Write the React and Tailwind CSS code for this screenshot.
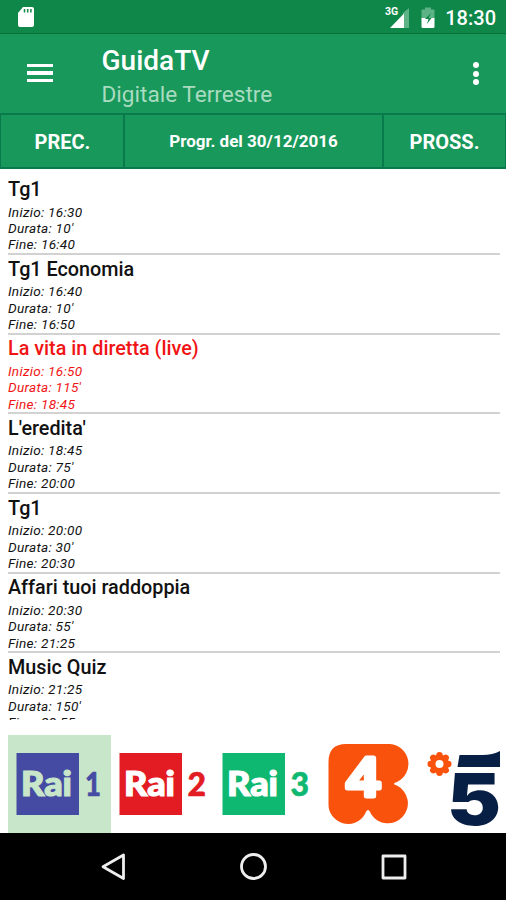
import React from 'react';

const programs = [
  { title: 'Tg1', start: '16:30', duration: "10'", end: '16:40' },
  { title: 'Tg1 Economia', start: '16:40', duration: "10'", end: '16:50' },
  { title: 'La vita in diretta (live)', start: '16:50', duration: "115'", end: '18:45', live: true },
  { title: "L'eredita'", start: '18:45', duration: "75'", end: '20:00' },
  { title: 'Tg1', start: '20:00', duration: "30'", end: '20:30' },
  { title: 'Affari tuoi raddoppia', start: '20:30', duration: "55'", end: '21:25' },
  { title: 'Music Quiz', start: '21:25', duration: "150'", end: '23:55' },
];

const raiChannels = [
  { number: '1', color: '#454ba3', text: '#c8e6c9', x: 77, width: 16, selected: true },
  { number: '2', color: '#e31b23', text: '#ffffff', x: 76.5, width: 18.5 },
  { number: '3', color: '#0fb870', text: '#ffffff', x: 76.5, width: 18.5 },
];

const StatusBar = () => (
  <div className="h-[34px] shrink-0 flex items-center justify-between bg-[#0e8748] border-b border-[#08713a] pl-[17px] pr-[10px]">
    <svg width="18" height="22" viewBox="0 0 18 22">
      <path d="M6 1h9q2 0 2 2v16q0 2-2 2H3q-2 0-2-2V7z" fill="#fff" />
      <path d="M7.500 3v3.500M10.700 3v3.500M13.900 3v3.500" stroke="#0e8748" strokeWidth="1.500" />
    </svg>
    <div className="flex items-center">
      <svg width="28" height="24" viewBox="0 0 28 24">
        <text x="1" y="10" fontFamily="Roboto, sans-serif" fontSize="10.500" fontWeight="700" fill="#fff">3G</text>
        <path d="M19 8l6-5v20h-6z" fill="#5db286" />
        <path d="M6 23L20 8.500V23z" fill="#fff" />
      </svg>
      <svg className="ml-2" width="16" height="24" viewBox="0 0 16 24">
        <path d="M5 2.500h6v2h3.500v9h-13v-9H5z" fill="#5db286" />
        <path d="M1.500 13h13v8.500q0 1.500-1.500 1.500H3q-1.500 0-1.500-1.500z" fill="#fff" />
        <path d="M11 8l-6 6h3.500l-1.500 5 4.500-6H8.500z" fill="#0e8748" />
      </svg>
      <span className="ml-[9px] pt-[2px] text-[20px] leading-none font-medium text-white">18:30</span>
    </div>
  </div>
);

const AppBar = () => (
  <header className="h-[81px] shrink-0 flex items-start bg-[#18985a] border-b-2 border-[#087a4b] pl-[27px] pr-[27px] text-white">
    <button className="mt-[29.500px] flex flex-col gap-[4px]" aria-label="Menu">
      <span className="block h-[3.500px] w-[26px] bg-white" />
      <span className="block h-[3.500px] w-[26px] bg-white" />
      <span className="block h-[3.500px] w-[26px] bg-white" />
    </button>
    <div className="ml-[48.500px] pt-[10px] flex-1">
      <h1 className="text-[28px] leading-[33px] font-medium">GuidaTV</h1>
      <p className="pt-px text-[22.600px] leading-[34px] text-[#a9dbc0]">Digitale Terrestre</p>
    </div>
    <button className="mt-[28px] flex flex-col gap-[2.500px]" aria-label="Altro">
      <span className="block size-[6px] rounded-full bg-white" />
      <span className="block size-[6px] rounded-full bg-white" />
      <span className="block size-[6px] rounded-full bg-white" />
    </button>
  </header>
);

const DayBar = () => (
  <div className="h-[54px] shrink-0 flex bg-[#18985a] border-x border-b-2 border-[#087a4b] text-white font-bold">
    <button className="w-[124px] border-r-2 border-[#087a4b] text-[20px] pt-px pl-px">PREC.</button>
    <div className="flex-1 flex items-center justify-center pt-[2px] text-[17px]">Progr. del 30/12/2016</div>
    <button className="w-[123px] border-l-2 border-[#087a4b] text-[20px] pt-px">PROSS.</button>
  </div>
);

const ProgramRow = ({ program }) => (
  <li className={`h-[79.670px] shrink-0 border-b-2 border-[#d2d2d2] pt-[1.500px] ${program.live ? 'text-[#f01414]' : 'text-[#111]'}`}>
    <h2 className="text-[19.800px] leading-[25px] font-medium">{program.title}</h2>
    <div className="mt-[1.500px] text-[13.600px] leading-[16.400px] tracking-[0.270px] italic">
      <p>Inizio: {program.start}</p>
      <p>Durata: {program.duration}</p>
      <p>Fine: {program.end}</p>
    </div>
  </li>
);

const RaiLogo = ({ channel }) => (
  <div className={`w-[103px] h-full shrink-0 ${channel.selected ? 'bg-[#c8e6c9]' : ''}`}>
    <svg width="103" height="98" viewBox="0 0 103 98">
      <rect x="8.500" y="18" width="62.500" height="62" fill={channel.color} />
      <text x="13" y="61" textLength="51" lengthAdjust="spacingAndGlyphs" fontFamily="Lato, sans-serif" fontWeight="900" fontSize="34" fill={channel.text} stroke={channel.text} strokeWidth="1.200">Rai</text>
      <text x={channel.x} y="61" textLength={channel.width} lengthAdjust="spacingAndGlyphs" fontFamily="Lato, sans-serif" fontWeight="900" fontSize="33" fill={channel.color} stroke={channel.color} strokeWidth="0.600">{channel.number}</text>
    </svg>
  </div>
);

const Rete4Logo = () => (
  <svg className="shrink-0" width="103" height="98" viewBox="0 0 103 98">
    <path d="M29 9H73A20 20 0 0 1 80 47Q74 48.500 80 50.500A20 20 0 1 1 54 79Q51 71 48 79A19.500 19.500 0 0 1 11.500 69V27Q11.500 9 29 9Z" fill="#f9520d" />
    <text x="29.500" y="61" textLength="33.500" lengthAdjust="spacingAndGlyphs" fontFamily="'Open Sans', sans-serif" fontWeight="600" fontSize="52" fill="#fff" stroke="#fff" strokeWidth="5" strokeLinejoin="round">4</text>
  </svg>
);

const petals = [0, 45, 90, 135, 180, 225, 270, 315];

const Canale5Logo = () => (
  <svg className="shrink-0 overflow-visible" width="80" height="98" viewBox="0 0 80 98">
    <g transform="translate(19.500 29)">
      {petals.map((angle) => (
        <circle key={angle} cx="8.800" cy="0" r="3.200" transform={`rotate(${angle})`} fill="#f9520d" />
      ))}
      <circle r="9.500" fill="#f9520d" />
      <circle r="4" fill="#fff" />
    </g>
    <text x="27" y="89.500" textLength="54" lengthAdjust="spacingAndGlyphs" fontFamily="Inter, sans-serif" fontWeight="900" fontSize="72" fill="#071f45">5</text>
    <path d="M36 32H80V37.500H36zM27 67H52V71H27z" fill="#fff" />
    <path d="M39.500 20H62Q73 20 80 16V32H37.500z" fill="#071f45" />
  </svg>
);

const ChannelStrip = () => (
  <div className="h-[98px] ml-2 mr-[6px] mt-[15px] shrink-0 flex">
    {raiChannels.map((channel) => (
      <RaiLogo key={channel.number} channel={channel} />
    ))}
    <Rete4Logo />
    <Canale5Logo />
  </div>
);

const NavigationBar = () => (
  <nav className="h-[67px] shrink-0 flex items-center justify-between bg-black pl-[99px] pr-[98px]">
    <svg width="28" height="30" viewBox="0 0 28 30" fill="none" stroke="#eee" strokeWidth="2.800" strokeLinejoin="round">
      <path d="M24.500 3v23.500L4 14.700z" />
    </svg>
    <svg width="30" height="30" viewBox="0 0 30 30" fill="none" stroke="#eee" strokeWidth="2.800">
      <circle cx="14.500" cy="14.500" r="12" />
    </svg>
    <svg width="28" height="30" viewBox="0 0 28 30" fill="none" stroke="#eee" strokeWidth="2.800" strokeLinejoin="round">
      <rect x="3" y="4" width="22" height="22" />
    </svg>
  </nav>
);

const App = () => {
  return (
    <div className="h-screen w-full flex flex-col bg-white overflow-hidden font-['Roboto',sans-serif]">
      <StatusBar />
      <AppBar />
      <DayBar />
      <ul className="h-[551px] shrink-0 flex flex-col overflow-hidden pt-[6.500px] pl-2 pr-[6px]">
        {programs.map((program) => (
          <ProgramRow key={program.start} program={program} />
        ))}
      </ul>
      <ChannelStrip />
      <NavigationBar />
    </div>
  );
};

export default App;
